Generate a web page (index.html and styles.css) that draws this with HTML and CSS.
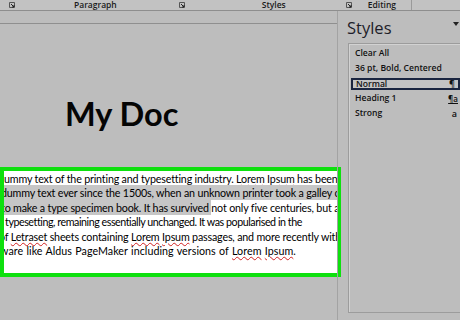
FILE: index.html
```html
<!DOCTYPE html>
<html lang="en">
<head>
  <meta charset="UTF-8" />
  <meta name="viewport" content="width=device-width, initial-scale=1.0" />
  <title>My Doc - Styles</title>
  <link rel="stylesheet" href="styles.css">
</head>
<body>
  <div class="ribbon">
    <span class="launcher first"><svg width="6" height="6" viewBox="0 0 6 6"><path d="M0.5 5.5V0.5h5v5z" fill="none" stroke="#555"/><path d="M2 2l3 3M5 3v2H3" fill="none" stroke="#222"/></svg></span>
    <span class="group-label para">Paragraph</span>
    <span class="launcher second"><svg width="6" height="6" viewBox="0 0 6 6"><path d="M0.5 5.5V0.5h5v5z" fill="none" stroke="#555"/><path d="M2 2l3 3M5 3v2H3" fill="none" stroke="#222"/></svg></span>
    <span class="group-label styles">Styles</span>
    <span class="launcher third"><svg width="6" height="6" viewBox="0 0 6 6"><path d="M0.5 5.5V0.5h5v5z" fill="none" stroke="#555"/><path d="M2 2l3 3M5 3v2H3" fill="none" stroke="#222"/></svg></span>
    <span class="group-label editing">Editing</span>
    <span class="ribbon-sep"></span>
  </div>

  <div class="workspace">
    <div class="doc">
      <div class="ruler"></div>
      <h1 class="doc-title">My Doc</h1>

      <div class="selection-box">
        <div class="line cut-1">ummy text of the printing and typesetting industry. <span class="typo">Lorem</span> <span class="typo">Ipsum</span> has been</div>
        <div class="line cut-3"><span class="hl">dummy text ever since the 1500s, when an unknown printer took a galley of type</span></div>
        <div class="line cut-3"><span class="hl">to make a type specimen book. It has survived </span>not only five centuries, but also the</div>
        <div class="line tight">typesetting, remaining essentially unchanged. It was popularised in the</div>
        <div class="line cut-4">of <span class="typo">Letraset</span> sheets containing <span class="typo">Lorem</span> <span class="typo">Ipsum</span> passages, and more recently with</div>
        <div class="line cut-5 loose">ware like Aldus PageMaker including versions of <span class="typo">Lorem</span> <span class="typo">Ipsum</span>.</div>
      </div>
    </div>

    <aside class="pane">
      <div class="pane-head">
        <span class="pane-title">Styles</span>
        <span class="pane-arrow"></span>
      </div>
      <ul class="style-list">
        <li class="style-item">Clear All</li>
        <li class="style-item">36 pt, Bold, Centered</li>
        <li class="style-item selected">Normal <span class="style-mark">¶</span></li>
        <li class="style-item">Heading 1 <span class="style-mark linked">¶a</span></li>
        <li class="style-item">Strong <span class="style-mark">a</span></li>
      </ul>
    </aside>
  </div>
</body>
</html>
```

FILE: styles.css
```css
body {
  margin: 0;
  width: 460px;
  height: 320px;
  overflow: hidden;
  background: #bdbdbd;
  font-family: 'Open Sans', 'Noto Sans', sans-serif;
  color: #111;
}
.ribbon {
  height: 10px;
  background: #c2c2c2;
  border-bottom: 1px solid #8e8e8e;
  display: flex;
  align-items: center;
  overflow: hidden;
}
.launcher {
  display: flex;
  width: 6px;
  height: 6px;
}
.launcher.first { margin-left: 9px; }
.launcher.second { margin-left: 62px; }
.launcher.third { margin-left: 60px; }
.group-label {
  font-size: 8.5px;
  font-weight: 600;
  line-height: 10px;
  color: #1a1a1a;
}
.group-label.para { margin-left: 59px; }
.group-label.styles { margin-left: 77px; }
.group-label.editing { margin-left: 16px; }
.ribbon-sep {
  width: 1px;
  height: 10px;
  background: #9a9a9a;
  margin-left: 15px;
}

.workspace {
  display: flex;
  height: 309px;
}
.doc {
  width: 337px;
  flex-shrink: 0;
}
.ruler {
  height: 12px;
  border-bottom: 1px solid #8f8f8f;
}
.doc-title {
  margin: 0;
  padding: 72px 0 0 65px;
  height: 71px;
  font-family: Lato, 'Open Sans', sans-serif;
  font-weight: 700;
  font-size: 32.5px;
  line-height: 36px;
  color: #050505;
}
.selection-box {
  position: relative;
  width: 333px;
  height: 101px;
  margin-right: -4px;
  padding-top: 1px;
  background: #fff;
  border: 4px solid #0ee00e;
  overflow: hidden;
  font-family: Lato, 'Open Sans', sans-serif;
  font-size: 10.7px;
  letter-spacing: -0.17px;
  line-height: 14.4px;
  color: #000;
}
.line {
  white-space: nowrap;
  padding-left: 1px;
}
.tight { letter-spacing: -0.45px; }
.loose { letter-spacing: 0.05px; word-spacing: 0.5px; }
.cut-1 { text-indent: -1px; }
.cut-3 { text-indent: -4px; }
.cut-4 { text-indent: -6px; }
.cut-5 { text-indent: -5px; }
.hl {
  background: #c6c6c6;
  padding: 1px 0;
}
.typo {
  text-decoration: underline wavy #d02020;
  text-decoration-thickness: 1px;
  text-underline-offset: 1px;
}

.pane {
  flex: 1;
  border-left: 1px solid #a3a3a3;
  position: relative;
}
.pane-head {
  height: 32px;
  display: flex;
  align-items: center;
  justify-content: space-between;
  padding-left: 9px;
}
.pane-title {
  font-size: 16.5px;
  color: #1d1d2a;
  line-height: 20px;
  margin-top: 1px;
}
.pane-arrow {
  width: 0;
  height: 0;
  border-left: 3px solid transparent;
  border-right: 3px solid transparent;
  border-top: 4px solid #222;
  margin-right: 1px;
  margin-top: -6px;
}
.style-list {
  list-style: none;
  margin: 0 -4px 0 10px;
  padding: 2px 0 0 0;
  height: 266px;
  border: 1px solid #9c9c9c;
  border-right: none;
  box-shadow: inset 1px 1px 0 #d2d2d2;
}
.style-item {
  height: 15px;
  line-height: 15px;
  padding-left: 6px;
  font-size: 8.6px;
  font-weight: 600;
  color: #111;
  position: relative;
}
.style-item.selected {
  height: 8px;
  line-height: 8px;
  margin: 2px 4px 1px 2px;
  padding-left: 3px;
  border: 2px solid #1a2540;
  background: #c4c4c4;
}
.style-mark {
  position: absolute;
  right: 7px;
  top: 0;
  font-size: 9px;
}
.style-item.selected .style-mark {
  right: 3px;
}
.style-mark.linked {
  text-decoration: underline;
  font-size: 8px;
  right: 6px;
}
```
